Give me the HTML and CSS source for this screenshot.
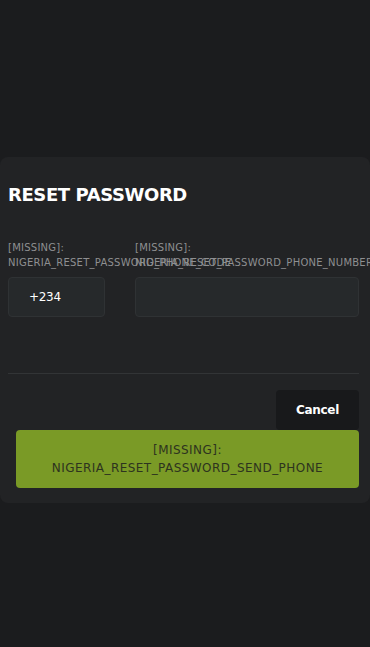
FILE: index.html
```html
<!DOCTYPE html>
<html>
<head>
<meta charset="utf-8">
<link rel="stylesheet" href="styles.css">
</head>
<body>
<div class="modal">
  <h1 class="title">RESET PASSWORD</h1>
  <div class="fields">
    <div class="field field-code">
      <label class="label">[MISSING]: NIGERIA_RESET_PASSWORD_PHONE_CODE</label>
      <div class="input">+234</div>
    </div>
    <div class="field field-number">
      <label class="label">[MISSING]: NIGERIA_RESET_PASSWORD_PHONE_NUMBER</label>
      <div class="input"></div>
    </div>
  </div>
  <hr class="divider">
  <div class="actions">
    <button class="cancel">Cancel</button>
  </div>
  <button class="send">[MISSING]:<br>NIGERIA_RESET_PASSWORD_SEND_PHONE</button>
</div>
</body>
</html>
```
FILE: styles.css
```css
html, body {
  margin: 0;
  padding: 0;
  background: #1b1c1e;
  overflow: hidden;
  width: 370px;
  height: 647px;
}
body {
  font-family: "DejaVu Sans", "Open Sans", sans-serif;
  padding-top: 157px;
  box-sizing: border-box;
}
.modal {
  background: #222325;
  border-radius: 8px;
  width: 370px;
  box-sizing: border-box;
  padding: 0 11px 15px 8px;
  height: 346px;
  display: flex;
  flex-direction: column;
}
.title {
  margin: 25px 0 0 0;
  font-size: 18px;
  line-height: 26px;
  font-weight: 700;
  color: #ffffff;
  letter-spacing: -0.4px;
}
.fields {
  display: grid;
  grid-template-columns: 97px 224px;
  column-gap: 30px;
  margin-top: 32px;
}
.field {
  display: flex;
  flex-direction: column;
  min-width: 0;
}
.label {
  font-size: 10px;
  line-height: 15px;
  color: #8e8f91;
  height: 30px;
  margin-bottom: 7px;
  letter-spacing: 0.25px;
}
.input {
  height: 40px;
  box-sizing: border-box;
  border: 1px solid #2f3234;
  background: #26292b;
  border-radius: 4px;
  color: #ffffff;
  font-size: 12px;
  line-height: 38px;
  padding-left: 20px;
  letter-spacing: -0.3px;
}
.divider {
  border: 0;
  border-top: 1px solid #323436;
  margin: 56px 0 0 0;
  height: 0;
}
.actions {
  display: flex;
  justify-content: flex-end;
  margin-top: 16px;
}
.cancel {
  width: 83px;
  height: 40px;
  border: 0;
  border-radius: 4px;
  background: #18191b;
  color: #ffffff;
  font-family: "DejaVu Sans", sans-serif;
  font-weight: 700;
  font-size: 12px;
  letter-spacing: -0.3px;
}
.send {
  margin-left: 8px;
  height: 58px;
  border: 0;
  border-radius: 4px;
  background: #7a9a26;
  color: #2d331f;
  font-family: "DejaVu Sans", sans-serif;
  font-size: 12px;
  line-height: 18px;
  padding: 0;
  letter-spacing: 0.45px;
}
```
